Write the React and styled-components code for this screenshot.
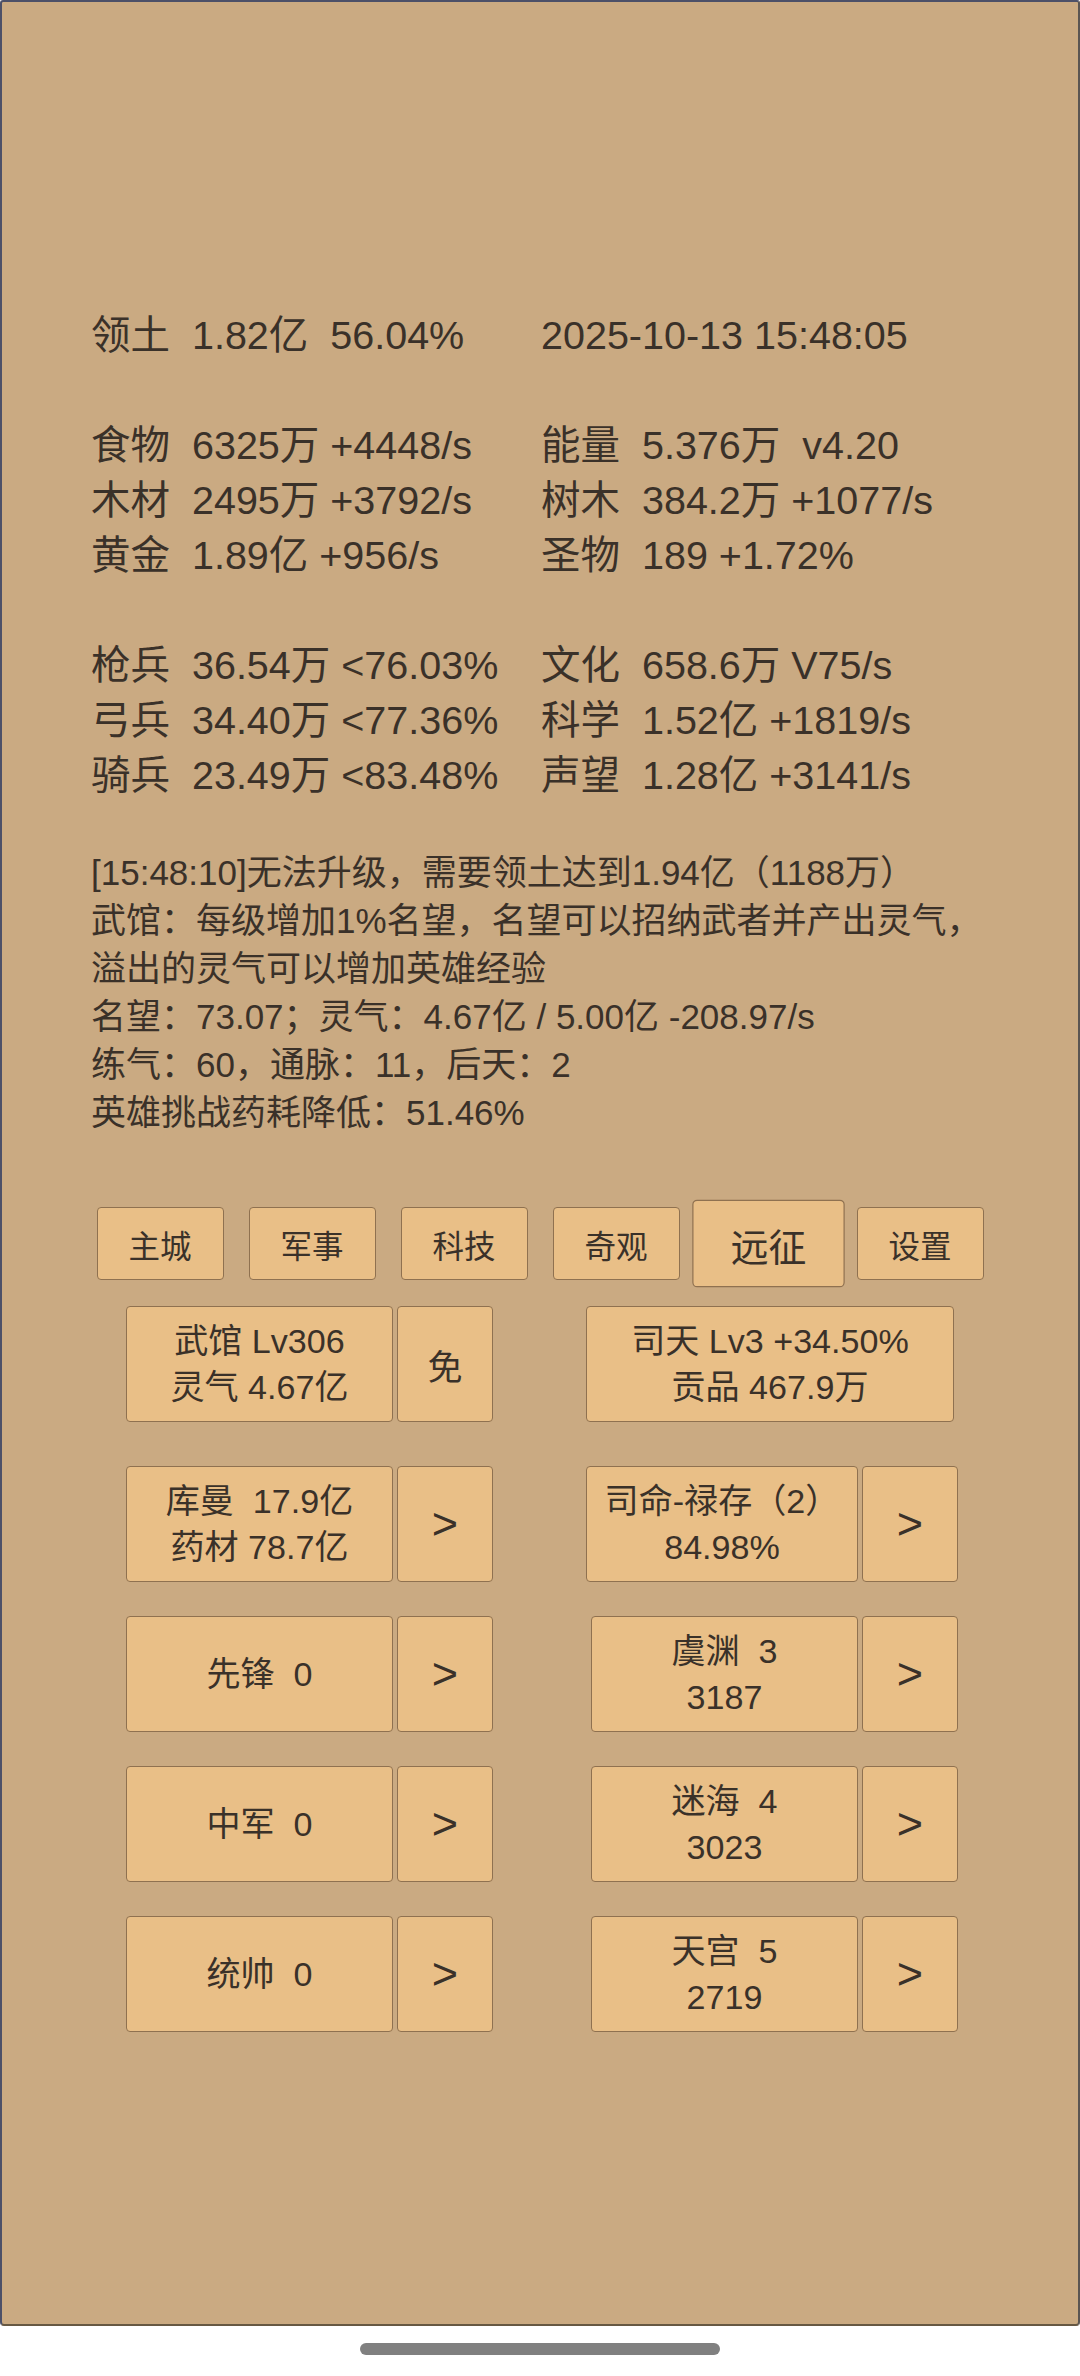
import React from 'react';
import styled, { createGlobalStyle } from 'styled-components';

const GlobalStyle = createGlobalStyle`
  html, body {
    margin: 0;
    padding: 0;
    background: #ffffff;
  }
  * {
    box-sizing: border-box;
  }
`;

const FONT = `"Liberation Sans", "Noto Sans CJK SC", sans-serif`;

const Screen = styled.div`
  width: 1080px;
  height: 2376px;
  display: flex;
  flex-direction: column;
  font-family: ${FONT};
  color: #3a3129;
`;

const Panel = styled.main`
  height: 2326px;
  display: flex;
  flex-direction: column;
  padding-top: 306px;
  background: #caaa82;
  border: 2px solid;
  border-color: #4c5068 #5a5552 #665843 #4c5068;
  border-radius: 3px 3px 4px 4px;
`;

const Stats = styled.section`
  padding-left: 89px;
  font-size: 39.5px;
  line-height: 55px;
  white-space: pre;
`;

const StatRow = styled.div`
  display: grid;
  grid-template-columns: 450px 1fr;
  height: 55px;
`;

const Log = styled.section`
  margin-top: 46px;
  padding-left: 89px;
  font-size: 35px;
  line-height: 48px;
  white-space: nowrap;
`;

const Tabs = styled.nav`
  margin-top: 70px;
  display: flex;
  justify-content: center;
  gap: 25px;
`;

const Tab = styled.button`
  width: 127px;
  height: 73px;
  padding: 0;
  font-family: ${FONT};
  font-size: 31.5px;
  color: #3a3129;
  background: #e9bf87;
  border: 1px solid #8f7150;
  border-radius: 4px;
  transform: ${(p) => (p.active ? 'scale(1.2)' : 'none')};
`;

const Row = styled.div`
  margin-top: ${(p) => p.gap}px;
  display: flex;
  justify-content: space-between;
  padding: 0 120px 0 124px;
`;

const Group = styled.div`
  display: flex;
  gap: 4px;
  margin-right: ${(p) => p.shift || 0}px;
`;

const Card = styled.div`
  width: ${(p) => p.w}px;
  height: 116px;
  display: flex;
  flex-direction: column;
  align-items: center;
  justify-content: center;
  font-size: 34.1px;
  line-height: 46px;
  white-space: pre;
  background: #e9bf87;
  border: 1px solid #8f7150;
  border-radius: 4px;
`;

const SideButton = styled.button`
  width: 96px;
  height: 116px;
  padding: 0;
  font-family: ${FONT};
  font-size: ${(p) => (p.arrow ? 45 : 35)}px;
  color: #3a3129;
  background: #e9bf87;
  border: 1px solid #8f7150;
  border-radius: 4px;
`;

const NavBar = styled.div`
  flex: 1;
  display: flex;
  justify-content: center;
  padding-top: 17px;
`;

const Pill = styled.div`
  width: 360px;
  height: 12px;
  border-radius: 6px;
  background: #808080;
`;

const stats = [
  ['领土  1.82亿  56.04%', '2025-10-13 15:48:05'],
  null,
  ['食物  6325万 +4448/s', '能量  5.376万  v4.20'],
  ['木材  2495万 +3792/s', '树木  384.2万 +1077/s'],
  ['黄金  1.89亿 +956/s', '圣物  189 +1.72%'],
  null,
  ['枪兵  36.54万 <76.03%', '文化  658.6万 V75/s'],
  ['弓兵  34.40万 <77.36%', '科学  1.52亿 +1819/s'],
  ['骑兵  23.49万 <83.48%', '声望  1.28亿 +3141/s'],
];

const logLines = [
  '[15:48:10]无法升级，需要领土达到1.94亿（1188万）',
  '武馆：每级增加1%名望，名望可以招纳武者并产出灵气，',
  '溢出的灵气可以增加英雄经验',
  '名望：73.07；灵气：4.67亿 / 5.00亿 -208.97/s',
  '练气：60，通脉：11，后天：2',
  '英雄挑战药耗降低：51.46%',
];

const tabs = ['主城', '军事', '科技', '奇观', '远征', '设置'];

const rows = [
  {
    gap: 26,
    left: { lines: ['武馆 Lv306', '灵气 4.67亿'], side: '免' },
    right: { lines: ['司天 Lv3 +34.50%', '贡品 467.9万'], w: 368, shift: 4 },
  },
  {
    gap: 44,
    left: { lines: ['库曼  17.9亿', '药材 78.7亿'], side: '>' },
    right: { lines: ['司命-禄存（2）', '84.98%'], w: 272, side: '>' },
  },
  {
    gap: 34,
    left: { lines: ['先锋  0'], side: '>' },
    right: { lines: ['虞渊  3', '3187'], side: '>' },
  },
  {
    gap: 34,
    left: { lines: ['中军  0'], side: '>' },
    right: { lines: ['迷海  4', '3023'], side: '>' },
  },
  {
    gap: 34,
    left: { lines: ['统帅  0'], side: '>' },
    right: { lines: ['天宫  5', '2719'], side: '>' },
  },
];

function CardGroup({ item }) {
  return (
    <Group shift={item.shift}>
      <Card w={item.w || 267}>
        {item.lines.map((line) => (
          <div key={line}>{line}</div>
        ))}
      </Card>
      {item.side && <SideButton arrow={item.side === '>'}>{item.side}</SideButton>}
    </Group>
  );
}

export default function App() {
  return (
    <Screen>
      <GlobalStyle />
      <Panel>
        <Stats>
          {stats.map((row, i) =>
            row ? (
              <StatRow key={i}>
                <span>{row[0]}</span>
                <span>{row[1]}</span>
              </StatRow>
            ) : (
              <StatRow key={i} />
            ),
          )}
        </Stats>
        <Log>
          {logLines.map((line) => (
            <div key={line}>{line}</div>
          ))}
        </Log>
        <Tabs>
          {tabs.map((t) => (
            <Tab key={t} active={t === '远征'}>
              {t}
            </Tab>
          ))}
        </Tabs>
        {rows.map((row, i) => (
          <Row key={i} gap={row.gap}>
            <CardGroup item={row.left} />
            <CardGroup item={row.right} />
          </Row>
        ))}
      </Panel>
      <NavBar>
        <Pill />
      </NavBar>
    </Screen>
  );
}
